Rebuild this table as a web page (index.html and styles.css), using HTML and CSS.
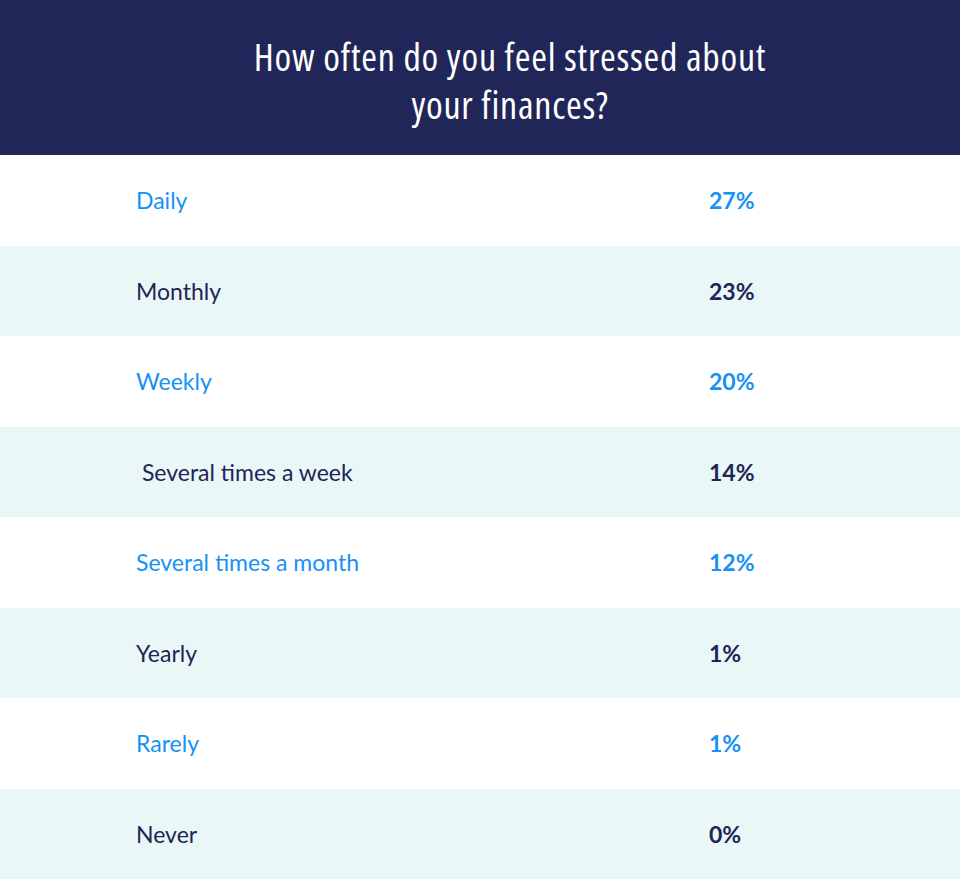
FILE: index.html
```html
<!DOCTYPE html>
<html lang="en">
<head>
<meta charset="utf-8">
<title>Stress survey</title>
<link rel="stylesheet" href="styles.css">
</head>
<body>
<div class="card">
  <header class="head">
    <h1 class="title">How often do you feel stressed about<br>your finances?</h1>
  </header>
  <div class="rows">
    <div class="row blue"><span class="label">Daily</span><span class="pct">27%</span></div>
    <div class="row dark alt"><span class="label">Monthly</span><span class="pct">23%</span></div>
    <div class="row blue"><span class="label">Weekly</span><span class="pct">20%</span></div>
    <div class="row dark alt"><span class="label">&nbsp;Several times a week</span><span class="pct">14%</span></div>
    <div class="row blue"><span class="label">Several times a month</span><span class="pct">12%</span></div>
    <div class="row dark alt"><span class="label">Yearly</span><span class="pct">1%</span></div>
    <div class="row blue"><span class="label">Rarely</span><span class="pct">1%</span></div>
    <div class="row dark alt"><span class="label">Never</span><span class="pct">0%</span></div>
  </div>
</div>
</body>
</html>
```
FILE: styles.css
```css
html, body { margin: 0; padding: 0; background: #ffffff; }
body { font-family: Lato, "Open Sans", sans-serif; }
.card { width: 960px; }
.head {
  background: #212659;
  height: 155px;
  display: flex;
  align-items: center;
  justify-content: center;
  padding-left: 60px;
  padding-top: 4px;
  box-sizing: border-box;
}
.title {
  margin: 0;
  color: #ffffff;
  font-family: "Open Sans", Lato, sans-serif;
  font-stretch: 75%;
  font-weight: 500;
  font-size: 38px;
  line-height: 48px;
  letter-spacing: 0.75px;
  text-align: center;
}
.rows { display: flex; flex-direction: column; }
.row {
  height: 90.5px;
  display: flex;
  align-items: center;
  padding-left: 136px;
  background: #ffffff;
  font-size: 23px;
}
.row.alt { background: #eaf7f7; }
.label { width: 573px; }
.pct { font-weight: 700; font-size: 23px; }
.blue { color: #1791f5; }
.dark { color: #1f2456; }
```
